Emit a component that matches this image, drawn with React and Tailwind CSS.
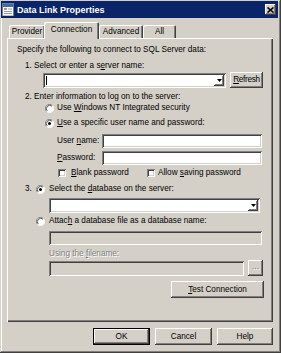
import React from 'react';

const sunkenEdge =
  'shadow-[inset_1px_1px_0_#808080,inset_-1px_-1px_0_#ffffff,inset_2px_2px_0_#404040,inset_-2px_-2px_0_#d4d0c8]';
const raisedEdge =
  'shadow-[inset_-1px_-1px_0_#404040,inset_1px_1px_0_#ffffff,inset_-2px_-2px_0_#808080]';
const disabledText = 'text-[#808080] [text-shadow:1px_1px_0_#ffffff]';

function U({ children }) {
  return <span className="underline underline-offset-[1px]">{children}</span>;
}

function Radio({ checked }) {
  return (
    <svg width="9" height="9" viewBox="0 0 12 12" className="shrink-0">
      <circle cx="6" cy="6" r="5" fill="#ffffff" />
      <path d="M9.9 2.1A5.5 5.5 0 0 0 2.1 9.9" fill="none" stroke="#808080" strokeWidth="1.2" />
      <path d="M9.1 2.9A4.4 4.4 0 0 0 2.9 9.1" fill="none" stroke="#404040" strokeWidth="1.2" />
      <path d="M2.1 9.9A5.5 5.5 0 0 0 9.9 2.1" fill="none" stroke="#ffffff" strokeWidth="1.2" />
      {checked && <circle cx="6" cy="6" r="2" fill="#000000" />}
    </svg>
  );
}

function Check() {
  return <span className={`w-[8px] h-[8px] shrink-0 bg-white ${sunkenEdge}`} />;
}

function DropArrow() {
  return (
    <span className={`w-[10px] h-[11px] flex items-center justify-center ${raisedEdge}`}>
      <svg width="5" height="3" viewBox="0 0 5 3">
        <path d="M0 0H5L2.5 3Z" fill="#000000" />
      </svg>
    </span>
  );
}

function Button({ children, className = '', def = false }) {
  const edge = def
    ? 'shadow-[inset_0_0_0_1px_#000000,inset_-2px_-2px_0_#404040,inset_2px_2px_0_#ffffff,inset_-3px_-3px_0_#808080]'
    : raisedEdge;
  return (
    <div className={`bg-[#d4d0c8] flex items-center justify-center ${edge} ${className}`}>
      {children}
    </div>
  );
}

function Tab({ label, selected, className = '' }) {
  return (
    <div
      className={`flex items-center justify-center rounded-t-[2px] bg-[#d4d0c8] shadow-[inset_1px_1px_0_#ffffff,inset_-1px_0_0_#404040,inset_-2px_0_0_#808080] ${
        selected ? 'h-[17px] -mb-[1px] relative z-10 pb-[2px]' : 'h-[13px]'
      } ${className}`}
    >
      {label}
    </div>
  );
}

export default function App() {
  return (
    <div className="w-[281px] h-[353px] bg-[#d4d0c8] flex flex-col font-['Liberation_Sans',Arial,sans-serif] text-[8.2px] leading-[10px] text-black shadow-[inset_-1px_-1px_0_#404040,inset_1px_1px_0_#d4d0c8,inset_-2px_-2px_0_#808080,inset_2px_2px_0_#ffffff]">
      {/* Title bar */}
      <div className="mt-[1px] ml-[1px] mr-[3px] h-[17px] bg-[#0a246a] flex items-center pl-[1px] pr-[2px]">
        <svg width="12" height="13" viewBox="0 0 12 13" className="shrink-0">
          <rect x="0.5" y="0.5" width="11" height="12" fill="#ffffff" stroke="#6a7fa8" />
          <rect x="1" y="1" width="10" height="3" fill="#3a6ea5" />
          <rect x="2" y="5" width="3" height="2" fill="#e08a3a" />
          <path d="M6 6H10M2 8.5H10M2 10.5H10" stroke="#8a9ab8" strokeWidth="1" />
          <rect x="1" y="12" width="10" height="1" fill="#c0c0c0" />
        </svg>
        <span className="ml-[3px] text-white font-bold text-[9px] flex-1">Data Link Properties</span>
        <div className={`w-[11px] h-[11px] bg-[#d4d0c8] flex items-center justify-center ${raisedEdge}`}>
          <svg width="7" height="6" viewBox="0 0 7 6">
            <path d="M0.5 0.5L6.5 5.5M6.5 0.5L0.5 5.5" stroke="#000000" strokeWidth="1.6" />
          </svg>
        </div>
      </div>

      {/* Tabs */}
      <div className="mt-[4px] h-[16px] ml-[9px] flex items-end">
        <Tab label="Provider" className="w-[36px]" />
        <Tab label="Connection" selected className="w-[55px] -ml-[1px]" />
        <Tab label="Advanced" className="w-[44px]" />
        <Tab label="All" className="w-[33px]" />
      </div>

      {/* Tab panel */}
      <div className="ml-[7px] w-[266px] h-[284px] flex flex-col shadow-[inset_1px_1px_0_#ffffff,inset_-1px_-1px_0_#404040,inset_-2px_-2px_0_#808080]">
        <div className="mt-[7px] ml-[10px] h-[10px]">Specify the following to connect to SQL Server data:</div>
        <div className="mt-[6px] ml-[18px] h-[10px]">
          1. Select or enter a s<U>e</U>rver name:
        </div>
        <div className="mt-[1px] h-[16px] flex items-center ml-[36px]">
          <div className={`w-[183px] h-[15px] bg-white flex items-center justify-between pl-[3px] pr-[2px] ${sunkenEdge}`}>
            <span className="w-[1px] h-[9px] bg-black" />
            <DropArrow />
          </div>
          <Button className="ml-[4px] w-[33px] h-[16px]">
            <span className="tracking-[-0.3px]">
              <U>R</U>efresh
            </span>
          </Button>
        </div>
        <div className="mt-[4px] ml-[18px] h-[10px]">2. Enter information to log on to the server:</div>
        <div className="mt-[1px] ml-[38px] h-[10px] flex items-center">
          <Radio />
          <span className="ml-[3px]">
            Use <U>W</U>indows NT Integrated security
          </span>
        </div>
        <div className="mt-[5px] ml-[38px] h-[10px] flex items-center">
          <Radio checked />
          <span className="ml-[3px]">
            <U>U</U>se a specific user name and password:
          </span>
        </div>
        <div className="mt-[6px] ml-[50px] h-[14px] flex items-center">
          <span className="w-[45px]">
            User <U>n</U>ame:
          </span>
          <div className={`w-[160px] h-[14px] bg-white ${sunkenEdge}`} />
        </div>
        <div className="mt-[3px] ml-[50px] h-[14px] flex items-center">
          <span className="w-[45px]">
            <U>P</U>assword:
          </span>
          <div className={`w-[160px] h-[14px] bg-white ${sunkenEdge}`} />
        </div>
        <div className="mt-[3px] ml-[51px] h-[10px] flex items-center">
          <div className="w-[89px] flex items-center">
            <Check />
            <span className="ml-[5px]">
              <U>B</U>lank password
            </span>
          </div>
          <Check />
          <span className="ml-[3px]">
            Allow <U>s</U>aving password
          </span>
        </div>
        <div className="mt-[6px] ml-[18px] h-[10px] flex items-center">
          <span className="w-[11px]">3.</span>
          <Radio checked />
          <span className="ml-[4px]">
            Select the <U>d</U>atabase on the server:
          </span>
        </div>
        <div className={`mt-[4px] ml-[42px] w-[211px] h-[15px] bg-white flex items-center justify-end pr-[2px] ${sunkenEdge}`}>
          <DropArrow />
        </div>
        <div className="mt-[3px] ml-[29px] h-[10px] flex items-center">
          <Radio />
          <span className="ml-[4px]">
            Attac<U>h</U> a database file as a database name:
          </span>
        </div>
        <div className={`mt-[5px] ml-[42px] w-[213px] h-[14px] bg-[#d4d0c8] ${sunkenEdge}`} />
        <div className={`mt-[4px] ml-[42px] h-[10px] ${disabledText}`}>
          Using the <U>f</U>ilename:
        </div>
        <div className="mt-[1px] ml-[42px] h-[16px] flex items-center">
          <div className={`w-[195px] h-[15px] bg-[#d4d0c8] ${sunkenEdge}`} />
          <Button className="ml-[4px] w-[15px] h-[16px]">
            <span className={`${disabledText} -mt-[2px]`}>...</span>
          </Button>
        </div>
        <Button className="mt-[5px] ml-[164px] w-[93px] h-[17px]">
          <span>
            <U>T</U>est Connection
          </span>
        </Button>
      </div>

      {/* Dialog buttons */}
      <div className="mt-[6px] ml-[93px] h-[17px] flex items-center gap-[5px]">
        <Button def className="w-[57px] h-[17px]">OK</Button>
        <Button className="w-[57px] h-[17px]">Cancel</Button>
        <Button className="w-[56px] h-[17px]">Help</Button>
      </div>
    </div>
  );
}
